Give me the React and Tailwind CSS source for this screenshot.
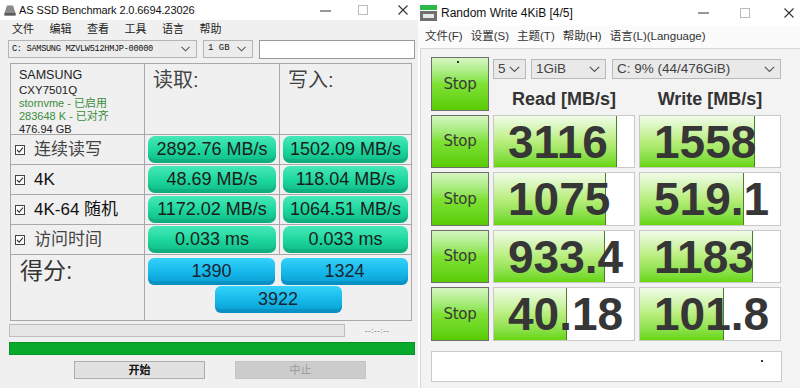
import React from 'react';

const SANS = "font-['Liberation_Sans','Noto_Sans_CJK_SC',sans-serif]";

const WinControls = ({ gap1, gap2 }) => (
  <div className="flex items-center shrink-0">
    <svg width="11" height="11" viewBox="0 0 11 11">
      <line x1="0" y1="6" x2="11" y2="6" stroke="#333" strokeWidth="1" />
    </svg>
    <svg width="10" height="10" viewBox="0 0 10 10" className={gap1}>
      <rect x="0.5" y="0.5" width="9" height="9" fill="none" stroke="#bbb" strokeWidth="1" />
    </svg>
    <svg width="10" height="10" viewBox="0 0 10 10" className={gap2}>
      <path d="M0.5 0.5 L9.5 9.5 M9.5 0.5 L0.5 9.5" stroke="#333" strokeWidth="1.1" />
    </svg>
  </div>
);

const Chevron = () => (
  <svg width="9" height="6" viewBox="0 0 9 6">
    <path d="M0.5 0.8 L4.5 4.8 L8.5 0.8" fill="none" stroke="#555" strokeWidth="1.1" />
  </svg>
);

const CheckBox = () => (
  <svg width="10" height="10" viewBox="0 0 10 10" className="shrink-0">
    <rect x="0.5" y="0.5" width="9" height="9" fill="#fff" stroke="#444" strokeWidth="1" />
    <path d="M2 5 L4.2 7.2 L8 2.6" fill="none" stroke="#333" strokeWidth="1.1" />
  </svg>
);

const TealPill = ({ children }) => (
  <div className="h-[27px] mx-[3px] mt-[1px] rounded-[7px] bg-gradient-to-b from-[#45e8b8] via-[#1dd89e] to-[#0fb986] shadow-[inset_0_-4px_0_rgba(0,80,50,0.12)] flex items-center justify-center text-[18px] text-[#1c1c1c]">
    {children}
  </div>
);

const BluePill = ({ children }) => (
  <div className="w-[127px] h-[27px] rounded-[6px] bg-gradient-to-b from-[#33d3fb] via-[#16b9ea] to-[#0a9dd2] shadow-[inset_0_-4px_0_rgba(0,60,100,0.15)] flex items-center justify-center text-[18px] text-[#1a2530]">
    {children}
  </div>
);

const asRows = [
  { label: '连续读写', cjk: true, read: '2892.76 MB/s', write: '1502.09 MB/s' },
  { label: '4K', read: '48.69 MB/s', write: '118.04 MB/s' },
  { label: '4K-64 随机', read: '1172.02 MB/s', write: '1064.51 MB/s' },
  { label: '访问时间', cjk: true, read: '0.033 ms', write: '0.033 ms' },
];

const AsSsd = () => (
  <div className={`w-[418px] h-[388px] shrink-0 bg-[#f0f0f0] flex flex-col ${SANS} text-[#222]`}>
    {/* title bar */}
    <div className="h-[20px] bg-white flex items-center pl-[4px] pr-[10px]">
      <svg width="12" height="11" viewBox="0 0 12 11" className="shrink-0">
        <path d="M3 0.5 H9 L11.5 8 V10.5 H0.5 V8 Z" fill="#8a8a8a" />
        <rect x="0.5" y="8" width="11" height="2.5" fill="#5a5a5a" />
      </svg>
      <span className="ml-[3px] text-[11px] tracking-[-0.1px] leading-none text-[#111] whitespace-nowrap">AS SSD Benchmark 2.0.6694.23026</span>
      <div className="ml-auto">
        <WinControls gap1="ml-[27px]" gap2="ml-[30px]" />
      </div>
    </div>

    {/* menu */}
    <div className="h-[19px] flex items-center pl-[12px] gap-[15.5px] text-[11px] text-[#222]">
      {['文件', '编辑', '查看', '工具', '语言', '帮助'].map((m) => (
        <span key={m}>{m}</span>
      ))}
    </div>

    {/* drive / size / text */}
    <div className="h-[18px] mt-[1px] flex items-center pl-[8px] gap-[6px]">
      <div className="w-[189px] h-[18px] border border-[#b5b5b5] bg-[#ececec] flex items-center justify-between pl-[3px] pr-[6px]">
        <span className="font-['Liberation_Mono',monospace] text-[8.6px] tracking-[-0.3px] text-[#111] whitespace-nowrap">C: SAMSUNG MZVLW512HMJP-00000</span>
        <Chevron />
      </div>
      <div className="w-[50px] h-[18px] border border-[#b5b5b5] bg-[#ececec] flex items-center justify-between pl-[4px] pr-[6px]">
        <span className="font-['Liberation_Mono',monospace] text-[9px] text-[#111]">1 GB</span>
        <Chevron />
      </div>
      <div className="w-[156px] h-[19px] border border-[#9a9a9a] bg-white" />
    </div>

    {/* results grid */}
    <div className="mt-[5px] ml-[10px] w-[402px] border border-[#a8a8a8] grid grid-cols-[134px_135px_131px] grid-rows-[71px_30px_30px_30px_30px_65px]">
      <div className="border-r border-b border-[#a8a8a8] pl-[8px] pt-[3px] flex flex-col">
        <div className="h-[16px] leading-[16px] text-[12.5px] text-[#222]">SAMSUNG</div>
        <div className="h-[14px] leading-[14px] text-[11.5px] text-[#222]">CXY7501Q</div>
        <div className="h-[13px] leading-[13px] text-[11px] text-[#3c8d3c]">stornvme - 已启用</div>
        <div className="h-[13px] leading-[13px] text-[11px] text-[#3c8d3c]">283648 K - 已对齐</div>
        <div className="h-[13px] leading-[13px] text-[11px] text-[#222]">476.94 GB</div>
      </div>
      <div className="border-r border-b border-[#a8a8a8] pl-[8px] pt-[4px] text-[20px] leading-[24px] text-[#444]">读取:</div>
      <div className="border-b border-[#a8a8a8] pl-[8px] pt-[4px] text-[20px] leading-[24px] text-[#444]">写入:</div>

      {asRows.map((r) => (
        <React.Fragment key={r.label}>
          <div className="border-r border-b border-[#a8a8a8] flex items-center pl-[4px] gap-[9px]">
            <CheckBox />
            <span className={`text-[17px] leading-none ${r.cjk ? 'text-[#444]' : 'text-[#111]'}`}>{r.label}</span>
          </div>
          <div className="border-r border-b border-[#a8a8a8]">
            <TealPill>{r.read}</TealPill>
          </div>
          <div className="border-b border-[#a8a8a8]">
            <TealPill>{r.write}</TealPill>
          </div>
        </React.Fragment>
      ))}

      <div className="border-r border-[#a8a8a8] pl-[9px] pt-[1px] text-[23px] leading-[30px] text-[#333]">得分:</div>
      <div className="col-span-2 flex flex-col items-center pt-[3px] gap-[1px]">
        <div className="flex gap-[6px]">
          <BluePill>1390</BluePill>
          <BluePill>1324</BluePill>
        </div>
        <BluePill>3922</BluePill>
      </div>
    </div>

    {/* progress */}
    <div className="mt-[3px] flex items-center">
      <div className="ml-[9px] w-[336px] h-[13px] border border-[#bdbdbd] bg-[#e6e6e6]" />
      <span className="ml-[20px] text-[8px] text-[#666] tracking-[0.5px]">--:--:--</span>
    </div>
    <div className="mt-[5px] ml-[9px] w-[406px] h-[13px] bg-[#07aa2a] border border-[#0a9225]" />

    {/* buttons */}
    <div className="mt-[6px] flex">
      <div className="ml-[74px] w-[131px] h-[18px] border border-[#adadad] bg-[#e1e1e1] flex items-center justify-center text-[11px] font-bold text-[#111]">开始</div>
      <div className="ml-[30px] w-[131px] h-[18px] border border-[#c4c4c4] bg-[#cccccc] flex items-center justify-center text-[11px] text-[#9a9a9a]">中止</div>
    </div>
  </div>
);

const cdmRows = [
  { read: '3116', rf: 88, write: '1558', wf: 82 },
  { read: '1075', rf: 80, write: '519.1', wf: 74 },
  { read: '933.4', rf: 79, write: '1183', wf: 81 },
  { read: '40.18', rf: 52, write: '101.8', wf: 60 },
];

const StopBtn = ({ dot }) => (
  <div className="relative border border-[#6e6e6e] bg-gradient-to-b from-[#d6f6c0] via-[#7fe232] to-[#58cc00] flex items-center justify-center">
    {dot && <div className="absolute top-[3px] left-[25px] w-[2px] h-[2px] bg-[#333]" />}
    <span className="font-['DejaVu_Sans',sans-serif] text-[15px] text-[#3a3a3a] tracking-[-0.3px]">Stop</span>
  </div>
);

const ValueCell = ({ value, fill }) => (
  <div className="relative border border-[#c9c9c9] bg-white overflow-hidden flex items-center">
    <div
      className="absolute left-0 top-0 bottom-0 bg-gradient-to-b from-[#f1fbe8] via-[#b9ee7c] to-[#66d600] border-r border-[#4f7d2e]"
      style={{ width: `${fill}%` }}
    />
    <span className="relative pl-[14px] font-['Liberation_Sans',sans-serif] font-bold text-[46px] leading-none text-[#363636]">
      {value}
    </span>
  </div>
);

const Combo = ({ w, children }) => (
  <div className={`${w} h-[20px] border border-[#b9b9b9] bg-[#e9e9e9] flex items-center justify-between pl-[4px] pr-[5px] text-[13.5px] text-[#444]`}>
    <span className="whitespace-nowrap">{children}</span>
    <svg width="11" height="7" viewBox="0 0 11 7" className="shrink-0">
      <path d="M0.8 0.8 L5.5 5.5 L10.2 0.8" fill="none" stroke="#555" strokeWidth="1.2" />
    </svg>
  </div>
);

const Crystal = () => (
  <div className={`w-[382px] h-[388px] shrink-0 flex flex-col ${SANS} text-[#222]`}>
    {/* title */}
    <div className="h-[25px] bg-white flex items-center pl-[2px] pr-[6px]">
      <svg width="17" height="16" viewBox="0 0 17 16" className="shrink-0">
        <rect x="0" y="0" width="17" height="5" fill="#2db84a" />
        <rect x="0" y="6" width="17" height="10" fill="#6f6f6f" />
        <rect x="3" y="9" width="11" height="4" fill="#e8e8e8" />
      </svg>
      <span className="ml-[4px] text-[12px] leading-none text-[#111] whitespace-nowrap">Random Write 4KiB [4/5]</span>
      <div className="ml-auto">
        <WinControls gap1="ml-[31px]" gap2="ml-[34px]" />
      </div>
    </div>

    {/* menu */}
    <div className="h-[23px] bg-[#fbfbfb] flex items-center pl-[7px] gap-[8px] text-[11.5px] text-[#333]">
      {['文件(F)', '设置(S)', '主题(T)', '帮助(H)', '语言(L)(Language)'].map((m) => (
        <span key={m}>{m}</span>
      ))}
    </div>

    {/* body */}
    <div className="flex-1 ml-[2px] border-l border-t border-[#d6d6d6] bg-[#f3f3f3] pl-[10px] pt-[8px]">
      <div className="grid grid-cols-[58px_142px_142px] grid-rows-[54px_53px_54px_53px_54px] gap-x-[4px] gap-y-[4px]">
        <StopBtn dot />
        <div className="col-span-2 flex flex-col">
          <div className="flex mt-[2px] gap-[5px]">
            <Combo w="w-[33px]">5</Combo>
            <Combo w="w-[75px]">1GiB</Combo>
            <div className="ml-[1px]">
              <Combo w="w-[169px]">C: 9% (44/476GiB)</Combo>
            </div>
          </div>
          <div className="flex mt-[7px] gap-[4px] font-bold text-[18px] text-[#333]">
            <div className="w-[142px] text-center">Read [MB/s]</div>
            <div className="w-[142px] text-center">Write [MB/s]</div>
          </div>
        </div>
        {cdmRows.map((r, i) => (
          <React.Fragment key={i}>
            <StopBtn />
            <ValueCell value={r.read} fill={r.rf} />
            <ValueCell value={r.write} fill={r.wf} />
          </React.Fragment>
        ))}
      </div>
      <div className="relative mt-[10px] w-[351px] h-[31px] border border-[#c9c9c9] bg-white">
        <div className="absolute top-[8px] left-[329px] w-[2px] h-[2px] bg-[#333]" />
      </div>
    </div>
  </div>
);

const App = () => (
  <div className="w-[800px] h-[388px] flex overflow-hidden bg-white">
    <AsSsd />
    <Crystal />
  </div>
);

export default App;
